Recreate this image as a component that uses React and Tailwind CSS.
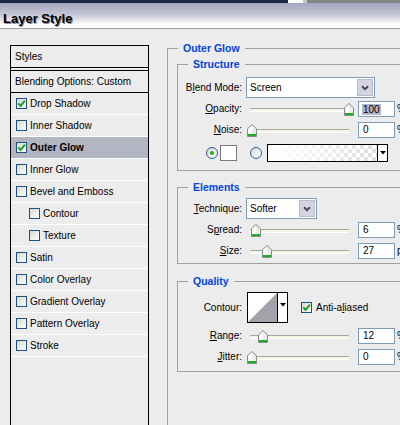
import React from 'react';

const styleItems = [
  { name: 'Drop Shadow', checked: true },
  { name: 'Inner Shadow' },
  { name: 'Outer Glow', checked: true, active: true },
  { name: 'Inner Glow' },
  { name: 'Bevel and Emboss' },
  { name: 'Contour', sub: true },
  { name: 'Texture', sub: true },
  { name: 'Satin' },
  { name: 'Color Overlay' },
  { name: 'Gradient Overlay' },
  { name: 'Pattern Overlay' },
  { name: 'Stroke' },
];

const Check = () => (
  <svg width="9" height="9" viewBox="0 0 9 9" className="block">
    <path d="M1.3 4.3 L3.6 6.9 L7.9 1.6" fill="none" stroke="#21a121" strokeWidth="2" />
  </svg>
);

const Box = ({ checked }) => (
  <span className="w-[11px] h-[11px] border border-[#1c5180] bg-linear-to-br from-[#d8d8d0] to-white flex items-center justify-center shrink-0">
    {checked && <Check />}
  </span>
);

const Radio = ({ on }) => (
  <span className="w-[12px] h-[12px] rounded-full border border-[#2b5e90] bg-linear-to-br from-[#d8d8d0] to-white flex items-center justify-center shrink-0">
    {on && <span className="w-[4px] h-[4px] rounded-full bg-[#21b021]" />}
  </span>
);

const Chevron = () => (
  <svg width="8" height="6" viewBox="0 0 8 6" className="block">
    <path d="M1 1.2 L4 4.2 L7 1.2" fill="none" stroke="#3c4a68" strokeWidth="2" />
  </svg>
);

const Caret = () => (
  <svg width="6" height="4" viewBox="0 0 6 4" className="block">
    <path d="M0 0 H6 L3 3.5 Z" fill="#000" />
  </svg>
);

const Select = ({ value, width }) => (
  <div className={`${width} h-[21px] border border-[#7f9db9] bg-white flex shrink-0`}>
    <span className="flex-1 pl-[3px] flex items-center">{value}</span>
    <span className="w-[16px] m-[1px] border border-[#b9bacb] bg-[#d3d4df] flex items-center justify-center">
      <Chevron />
    </span>
  </div>
);

const Thumb = () => (
  <svg width="10" height="13" viewBox="0 0 10 13" className="block">
    <path d="M5 0.5 L9.5 4.8 V12.5 H0.5 V4.8 Z" fill="#e9ecea" stroke="#7f8f8a" />
    <path d="M5 1.5 L1.5 4.9 V10 H5 Z" fill="#fbfbfb" />
    <rect x="1" y="10" width="8" height="2" fill="#1fae1f" />
  </svg>
);

const Slider = ({ pos }) => (
  <div className="relative w-[102px] h-[16px] shrink-0 ml-[5px]">
    <div className="absolute left-[3px] right-0 top-[7px] h-[4px] rounded-[1px] border-t border-[#a7a79f] border-b border-b-white bg-[#f4f4e4]" />
    <div className="absolute top-[2px]" style={{ left: pos }}>
      <Thumb />
    </div>
  </div>
);

const Field = ({ value, selected }) => (
  <div className={`w-[37px] h-[16px] border border-[#7f9db9] bg-white flex items-center shrink-0 ml-[9px] ${selected ? 'pl-[3px]' : 'pl-[4px]'}`}>
    <span className={selected ? 'bg-[#b4b4c6] px-[1px] leading-[11px]' : ''}>{value}</span>
  </div>
);

const Label = ({ children }) => (
  <span className="w-[64px] text-right shrink-0">{children}</span>
);

const SliderRow = ({ label, pos, value, unit = '%', selected, className = '' }) => (
  <div className={`flex items-center h-[16px] ${className}`}>
    <Label>{label}</Label>
    <Slider pos={pos} />
    <Field value={value} selected={selected} />
    <span className="ml-[2px]">{unit}</span>
  </div>
);

const Legend = ({ children }) => (
  <legend className="ml-[10px] px-[5px] text-[#0046d5] font-bold text-[10.5px] leading-[13px]">{children}</legend>
);

export default function App() {
  return (
    <div className="w-[400px] h-[425px] overflow-hidden bg-[#ececec] font-['Liberation_Sans',Arial,sans-serif] text-[10px] leading-[12px] text-black">
      {/* window behind */}
      <div className="h-[3px] flex">
        <div className="w-[288px] bg-[#1b2944]" />
        <div className="w-[15px] bg-white" />
        <div className="w-[4px] bg-[#c4c4c4]" />
        <div className="flex-1 bg-[#858585]" />
      </div>

      {/* Title bar */}
      <div className="h-[25px] pl-[3px] pt-[8px] bg-[linear-gradient(#a5a6bd,#c3c4d4_45%,#fdfdfd_85%,#fff)]">
        <span className="block text-[13px] leading-[15px] font-bold [text-shadow:1px_1px_0_#8e8e9e]">Layer Style</span>
      </div>
      <div className="h-px bg-[#a0a0aa]" />

      <div className="flex">
        {/* Styles list */}
        <div className="ml-[10px] mt-[16px] w-[139px] h-[400px] border border-black shrink-0">
          <div className="h-[22px] border-b border-black pl-[4px] flex items-center">Styles</div>
          <div className="mt-[2px] border-t border-black">
            <div className="h-[22px] border-b border-black pl-[4px] flex items-center">Blending Options: Custom</div>
            {styleItems.map((s) => (
              <div
                key={s.name}
                className={`h-[22px] border-b border-white flex items-center gap-[3px] ${s.sub ? 'pl-[18px]' : 'pl-[5px]'} ${s.active ? 'bg-[#b3b5c3] font-bold' : ''}`}
              >
                <Box checked={s.checked} />
                <span>{s.name}</span>
              </div>
            ))}
          </div>
        </div>

        {/* Outer Glow panel */}
        <fieldset className="ml-[18px] mt-[13px] w-[260px] h-[420px] border border-[#a0a0a0] shrink-0">
          <Legend>Outer Glow</Legend>
          <div className="pl-[9px] pt-[3px]">
            {/* Structure */}
            <fieldset className="border border-[#a0a0a0] pt-[6px] pb-[8px]">
              <Legend>Structure</Legend>
              <div className="flex items-center h-[21px]">
                <Label>B<u className="underline-offset-1">l</u>end Mode:</Label>
                <span className="ml-[4px]">
                  <Select value="Screen" width="w-[129px]" />
                </span>
              </div>
              <SliderRow className="mt-[3px]" label={<><u className="underline-offset-1">O</u>pacity:</>} pos={97} value="100" selected />
              <SliderRow className="mt-[5px]" label={<><u className="underline-offset-1">N</u>oise:</>} pos={0} value="0" />
              <div className="mt-[6px] h-[18px] flex items-center">
                <span className="ml-[28px]">
                  <Radio on />
                </span>
                <span className="ml-[2px] w-[17px] h-[16px] border border-[#7a7a7a] bg-white" />
                <span className="ml-[13px]">
                  <Radio />
                </span>
                <div className="ml-[5px] w-[121px] h-[18px] border border-black flex">
                  <div className="flex-1 [background-image:linear-gradient(to_right,#fff_5%,rgba(255,255,255,0.15)),repeating-conic-gradient(#d9d9d9_0%_25%,#fff_0%_50%)] [background-size:100%_100%,8px_8px]" />
                  <div className="w-[10px] border-l border-black bg-white flex items-center justify-center">
                    <Caret />
                  </div>
                </div>
              </div>
            </fieldset>

            {/* Elements */}
            <fieldset className="mt-[10px] border border-[#a0a0a0] pt-[4px] pb-[4px]">
              <Legend>Elements</Legend>
              <div className="flex items-center h-[21px]">
                <Label><u className="underline-offset-1">T</u>echnique:</Label>
                <span className="ml-[4px]">
                  <Select value="Softer" width="w-[71px]" />
                </span>
              </div>
              <SliderRow className="mt-[3px]" label={<>S<u className="underline-offset-1">p</u>read:</>} pos={4} value="6" />
              <SliderRow className="mt-[5px]" label={<><u className="underline-offset-1">S</u>ize:</>} pos={15} value="27" unit="px" />
            </fieldset>

            {/* Quality */}
            <fieldset className="mt-[11px] border border-[#a0a0a0] pt-[4px] pb-[6px]">
              <Legend>Quality</Legend>
              <div className="flex items-center h-[31px]">
                <Label>Contour:</Label>
                <div className="ml-[5px] w-[41px] h-[31px] border border-black flex shrink-0">
                  <svg width="29" height="29" viewBox="0 0 29 29" className="block bg-white">
                    <path d="M0 29 L29 0 V29 Z" fill="#a3a3ab" />
                  </svg>
                  <div className="flex-1 border-l border-black bg-white flex justify-center pt-[10px]">
                    <Caret />
                  </div>
                </div>
                <span className="ml-[13px]">
                  <Box checked />
                </span>
                <span className="ml-[4px]">Anti-a<u className="underline-offset-1">l</u>iased</span>
              </div>
              <SliderRow className="mt-[5px]" label={<><u className="underline-offset-1">R</u>ange:</>} pos={11} value="12" />
              <SliderRow className="mt-[5px]" label={<><u className="underline-offset-1">J</u>itter:</>} pos={0} value="0" />
            </fieldset>
          </div>
        </fieldset>
      </div>
    </div>
  );
}
